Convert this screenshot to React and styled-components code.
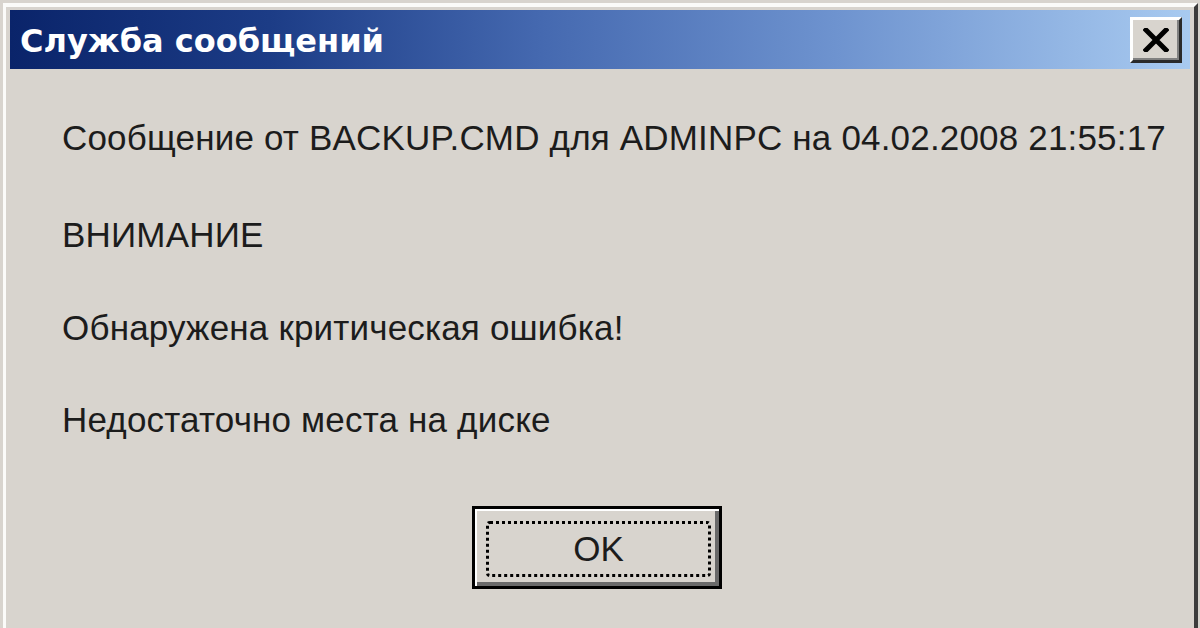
import React from "react";
import styled, { createGlobalStyle } from "styled-components";

const Global = createGlobalStyle`
  html, body { margin: 0; padding: 0; background: #d8d4ce; }
  body { width: 1200px; height: 628px; overflow: hidden; }
`;

const Window = styled.div`
  box-sizing: border-box;
  width: 1200px;
  height: 628px;
  padding: 3px 2px 0 3px;
  background: #d8d4ce;
  display: flex;
`;

const Frame = styled.div`
  box-sizing: border-box;
  flex: 1;
  min-width: 0;
  display: flex;
  flex-direction: column;
  border-top: 4px solid #fbfbf9;
  border-left: 3px solid #fbfbf9;
  border-right: 4px solid #3c3c3c;
  padding: 3px 4px 0 4px;
  background: #d8d4ce;
`;

const TitleBar = styled.div`
  height: 59px;
  flex: none;
  display: flex;
  align-items: center;
  justify-content: space-between;
  padding: 0 8px 0 10px;
  background: linear-gradient(90deg, #0a246a 0%, #1c3c86 22%, #4569b0 45%, #6e93cf 70%, #a8caf0 100%);
`;

const Title = styled.span`
  font-family: "DejaVu Sans", "Liberation Sans", sans-serif;
  font-weight: bold;
  font-size: 32px;
  color: #ffffff;
  margin-top: 2px;
`;

const CloseButton = styled.div`
  box-sizing: border-box;
  width: 52px;
  height: 46px;
  display: flex;
  align-items: center;
  justify-content: center;
  background: #d8d4ce;
  border-top: 3px solid #ffffff;
  border-left: 3px solid #ffffff;
  border-right: 3px solid #2a2a2a;
  border-bottom: 3px solid #2a2a2a;
  box-shadow: inset -2px -2px 0 #808080;
`;

const Body = styled.div`
  flex: 1;
  min-width: 0;
  display: flex;
  flex-direction: column;
  padding: 49px 58px 0 52px;
`;

const Line = styled.p`
  margin: 0 0 ${(p) => p.$gap}px 0;
  font-family: "Liberation Sans", Arial, sans-serif;
  font-size: 35px;
  letter-spacing: 0.18px;
  line-height: 40px;
  color: #1c1c1c;
  white-space: nowrap;
`;

const ButtonRow = styled.div`
  display: flex;
  justify-content: center;
`;

const OkButton = styled.div`
  box-sizing: border-box;
  width: 250px;
  height: 83px;
  border: 3px solid #000;
  background: #d8d4ce;
  box-shadow: inset 2px 2px 0 #ffffff, inset -4px -4px 0 #6a6a6a;
  display: flex;
  align-items: stretch;
  padding: 12px 8px 9px 11px;
`;

const Focus = styled.div`
  flex: 1;
  border: 3px dotted #000;
  border-radius: 4px;
  display: flex;
  align-items: center;
  justify-content: center;
  font-family: "Liberation Sans", Arial, sans-serif;
  font-size: 35px;
  color: #1c1c1c;
`;

export default function App() {
  return (
    <>
      <Global />
      <Window>
        <Frame>
          <TitleBar>
            <Title>Служба сообщений</Title>
            <CloseButton>
              <svg width="26" height="24" viewBox="0 0 26 24">
                <path d="M3 2 L23 22 M23 2 L3 22" stroke="#000" strokeWidth="5" strokeLinecap="square" />
              </svg>
            </CloseButton>
          </TitleBar>
          <Body>
            <Line $gap={57}>Сообщение от BACKUP.CMD для ADMINPC на 04.02.2008 21:55:17</Line>
            <Line $gap={53}>ВНИМАНИЕ</Line>
            <Line $gap={52}>Обнаружена критическая ошибка!</Line>
            <Line $gap={66}>Недостаточно места на диске</Line>
            <ButtonRow>
              <OkButton>
                <Focus>OK</Focus>
              </OkButton>
            </ButtonRow>
          </Body>
        </Frame>
      </Window>
    </>
  );
}
